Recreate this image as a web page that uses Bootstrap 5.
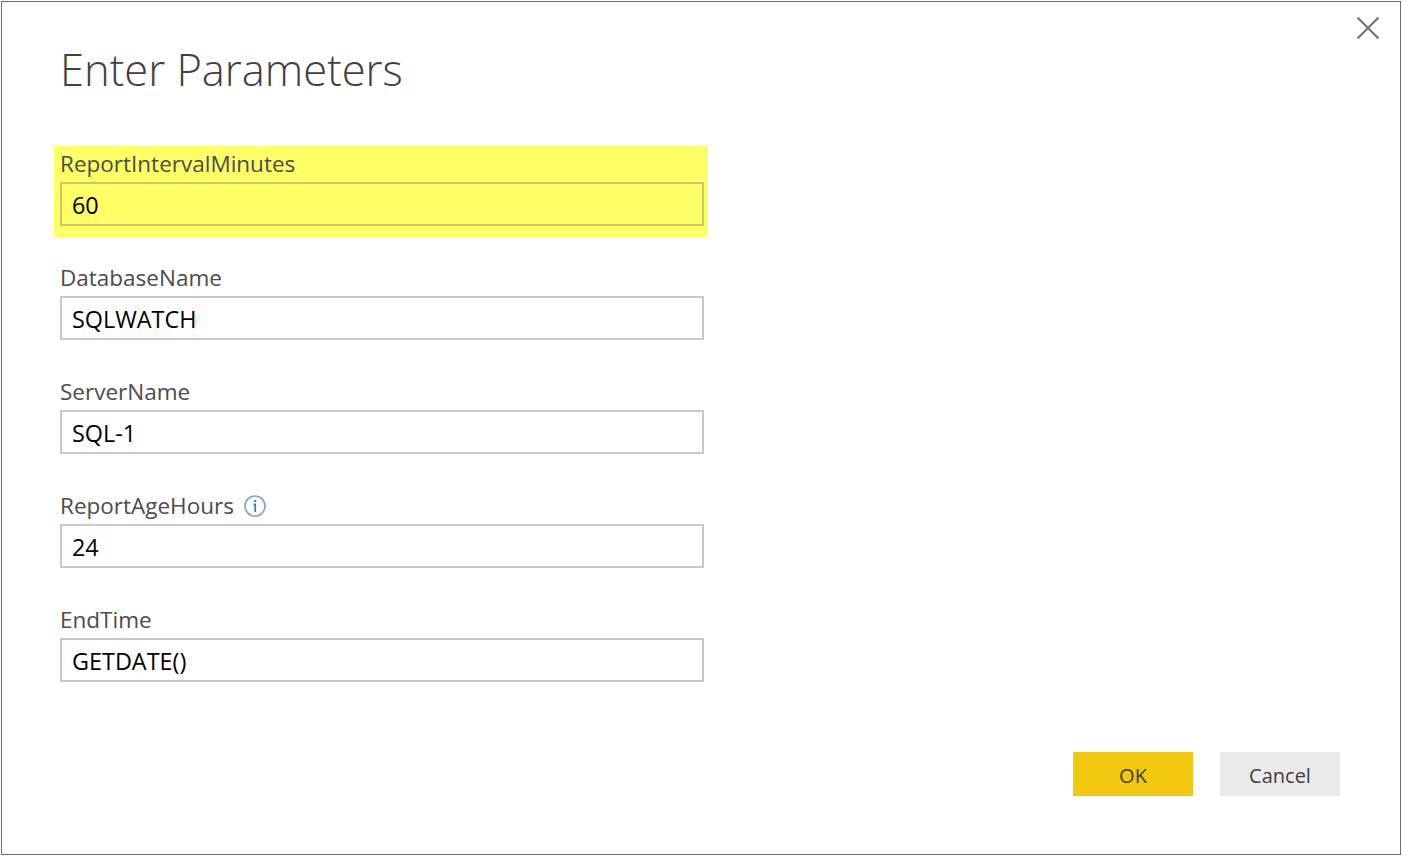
<!DOCTYPE html>
<html lang="en">
<head>
  <meta charset="UTF-8">
  <title>Enter Parameters</title>
  <link href="https://cdn.jsdelivr.net/npm/bootstrap@5.3.3/dist/css/bootstrap.min.css" rel="stylesheet">
  <style>
    body { background: #fff; font-family: "Open Sans", "Noto Sans", sans-serif; }
    .dlg-frame { width: 1400px; height: 854px; margin: 1px 0 0 1px; border: 1px solid #6e6e6e; padding: 0 60px 0 58px; }
    .dlg-head { height: 144px; }
    .dlg-title { font-family: "Open Sans", sans-serif; font-weight: 300; font-size: 43.5px; line-height: 60px; margin: 38px 0 0; color: #404040; }
    .dlg-close { margin: 14px -40px 0 0; width: 24px; height: 24px; border: 0; padding: 0; background: none; }
    .dlg-fields { width: 644px; }
    .dlg-field { margin-bottom: 34px; }
    .dlg-field-hl { background: #ffff66; margin: 0 -4px 23px -6px; padding: 0 4px 11px 6px; }
    .dlg-label { display: flex; align-items: center; gap: 6px; height: 36px; margin: 0; font-size: 22.5px; color: #4b4b4b; }
    .dlg-info { margin-left: 4px; }
    .dlg-input.form-control { height: 44px; border: 2px solid #c8c8c8; border-radius: 0; padding: 2px 10px 0; font-size: 23.4px; color: #000; background: transparent; box-shadow: none; }
    .dlg-field-hl .dlg-input.form-control { border-color: #c8c864; }
    .dlg-foot { margin-top: 36px; gap: 27px; }
    .dlg-btn.btn { width: 120px; height: 44px; border: 0; border-radius: 0; padding: 4px 0 0; font-size: 20px; color: #404040; }
    .dlg-ok.btn { background: #f2c811; }
    .dlg-cancel.btn { background: #eaeaea; }
  </style>
</head>
<body class="m-0">

  <div class="dlg-frame d-flex flex-column">
    <div class="dlg-head d-flex justify-content-between align-items-start">
      <h1 class="dlg-title">Enter Parameters</h1>
      <button class="dlg-close" type="button" aria-label="Close">
        <svg class="d-block" width="24" height="24" viewBox="0 0 24 24"><path d="M1.5 1.5 L22.5 22.5 M22.5 1.5 L1.5 22.5" stroke="#6e6e6e" stroke-width="2" fill="none"/></svg>
      </button>
    </div>

    <form class="dlg-fields">
      <div class="dlg-field dlg-field-hl">
        <label class="dlg-label" for="f1">ReportIntervalMinutes</label>
        <input id="f1" class="form-control dlg-input" value="60">
      </div>
      <div class="dlg-field">
        <label class="dlg-label" for="f2">DatabaseName</label>
        <input id="f2" class="form-control dlg-input" value="SQLWATCH">
      </div>
      <div class="dlg-field">
        <label class="dlg-label" for="f3">ServerName</label>
        <input id="f3" class="form-control dlg-input" value="SQL-1">
      </div>
      <div class="dlg-field">
        <label class="dlg-label" for="f4">ReportAgeHours
          <svg class="dlg-info" width="22" height="22" viewBox="0 0 22 22"><circle cx="11" cy="11" r="10" fill="none" stroke="#7ba3d0" stroke-width="1.6"/><path d="M9.5 9.5 H11.2 V17" fill="none" stroke="#3f7cbf" stroke-width="1.8"/><rect x="10.2" y="5" width="2" height="2" fill="#3f7cbf"/></svg>
        </label>
        <input id="f4" class="form-control dlg-input" value="24">
      </div>
      <div class="dlg-field">
        <label class="dlg-label" for="f5">EndTime</label>
        <input id="f5" class="form-control dlg-input" value="GETDATE()">
      </div>
    </form>

    <div class="dlg-foot d-flex justify-content-end">
      <button class="btn dlg-btn dlg-ok" type="button">OK</button>
      <button class="btn dlg-btn dlg-cancel" type="button">Cancel</button>
    </div>
  </div>

  <script src="https://cdn.jsdelivr.net/npm/bootstrap@5.3.3/dist/js/bootstrap.bundle.min.js"></script>
</body>
</html>
